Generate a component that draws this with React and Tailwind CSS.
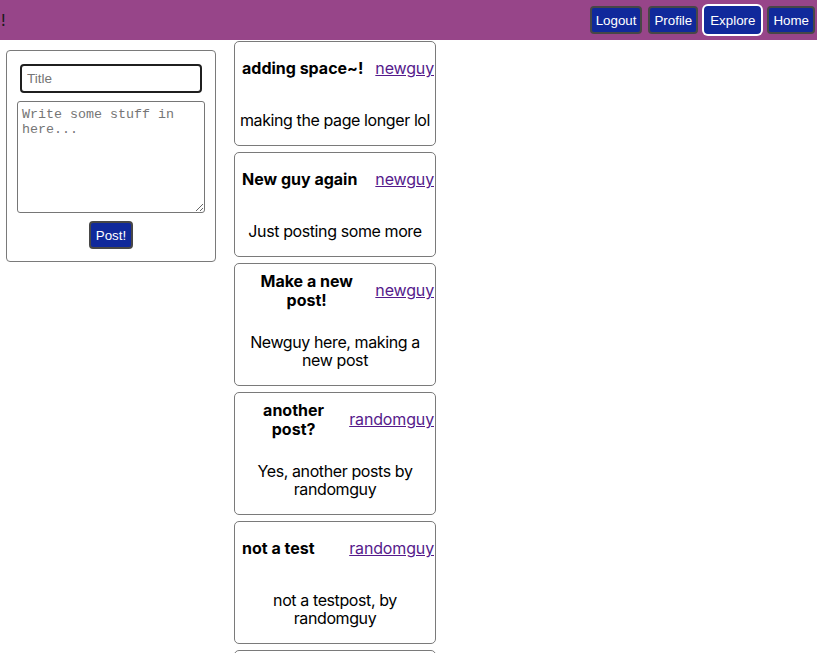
import React from "react";

const posts = [
  { title: "adding space~!", user: "newguy", body: "making the page longer lol" },
  { title: "New guy again", user: "newguy", body: "Just posting some more" },
  { title: "Make a new post!", user: "newguy", body: "Newguy here, making a new post" },
  { title: "another post?", user: "randomguy", body: "Yes, another posts by randomguy" },
  { title: "not a test", user: "randomguy", body: "not a testpost, by randomguy" },
  { title: "test post", user: "randomguy", body: "just a test" },
];

function NavButton({ children, active }) {
  return (
    <button
      type="button"
      className={
        "h-[28px] px-[4px] rounded-[4px] border-2 bg-[#10299b] text-white text-[13.33px] leading-[15px] font-['Liberation_Sans',Arial,sans-serif] " +
        (active ? "border-[#10299b] ring-2 ring-white" : "border-[#474747]")
      }
    >
      {children}
    </button>
  );
}

function PostCard({ post }) {
  return (
    <div className="border border-[#7a7a7a] rounded-[5px] bg-white">
      <div className="h-[53px] flex items-center justify-between gap-[4px] pl-[7px] pr-[1px]">
        <h3 className="font-bold text-[16px] leading-[19px] text-center text-black">{post.title}</h3>
        <a href="#" className="text-[16px] leading-[19px] tracking-[-0.15px] text-[#551a8b] underline shrink-0">
          {post.user}
        </a>
      </div>
      <p className="my-4 text-center text-[16px] leading-[18px] tracking-[-0.4px] text-black">{post.body}</p>
    </div>
  );
}

export default function App() {
  return (
    <div className="min-h-screen bg-white font-['Inter',sans-serif]">
      <header className="h-10 bg-[#974589] flex items-center justify-between pr-[2px]">
        <span className="text-[16px] text-[#1a1a1a] pl-[1px]">!</span>
        <nav className="flex items-center gap-[6px]">
          <NavButton>Logout</NavButton>
          <NavButton>Profile</NavButton>
          <NavButton active>Explore</NavButton>
          <NavButton>Home</NavButton>
        </nav>
      </header>
      <div className="flex items-start">
        <form
          className="ml-[6px] mt-[10px] w-[210px] h-[212px] border border-[#7a7a7a] rounded-[4px] flex flex-col items-start pt-[13px] font-['Liberation_Sans',Arial,sans-serif]"
          onSubmit={(e) => e.preventDefault()}
        >
          <input
            type="text"
            placeholder="Title"
            className="ml-[13px] w-[182px] h-[29px] border-2 border-[#1f1f1f] rounded-[4px] px-[5px] text-[13.5px] placeholder:text-[#757575] outline-none"
          />
          <textarea
            placeholder="Write some stuff in here..."
            className="ml-[10px] mt-[8px] w-[188px] h-[112px] border border-[#767676] rounded-[3px] px-[4px] pt-[5px] text-[13.33px] leading-[15px] font-['Liberation_Mono',monospace] placeholder:text-[#757575] outline-none resize"
          />
          <button
            type="submit"
            className="self-center mt-[8px] h-[28px] px-[5px] rounded-[4px] border-2 border-[#474747] bg-[#10299b] text-white text-[13.33px] leading-[15px]"
          >
            Post!
          </button>
        </form>
        <div className="ml-[18px] mt-[1px] w-[202px] flex flex-col gap-[6px]">
          {posts.map((p, i) => (
            <PostCard key={i} post={p} />
          ))}
        </div>
      </div>
    </div>
  );
}
